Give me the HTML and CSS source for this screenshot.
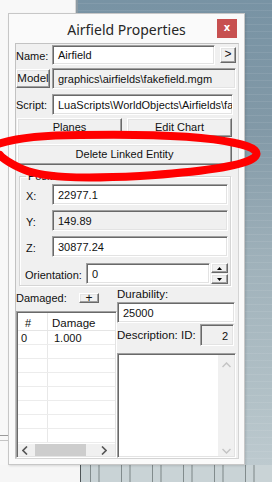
FILE: index.html
```html
<!DOCTYPE html>
<html>
<head>
<meta charset="utf-8">
<link rel="stylesheet" href="styles.css">
</head>
<body>
<div class="dialog">
  <div class="titlebar">
    <span></span>
    <span class="title">Airfield Properties</span>
    <span class="close">x</span>
  </div>
  <div class="client">
    <div class="row r-name">
      <span class="lbl w36">Name:</span>
      <div class="field f-name">Airfield</div>
      <div class="btn b-more">&gt;</div>
    </div>
    <div class="row r-model">
      <div class="btn b-model">Model</div>
      <div class="field disabled f-model">graphics\airfields\fakefield.mgm</div>
    </div>
    <div class="row r-script">
      <span class="lbl w36">Script:</span>
      <div class="field f-script">LuaScripts\WorldObjects\Airfields\fakefield.lua</div>
    </div>
    <div class="row r-btns">
      <div class="btn b-half">Planes</div>
      <div class="btn b-half">Edit Chart</div>
    </div>
    <div class="row r-delete">
      <div class="btn b-delete">Delete Linked Entity</div>
    </div>
    <fieldset class="group">
      <legend>Position</legend>
      <div class="row g-row g-first">
        <span class="lbl g-lbl">X:</span>
        <div class="field g-field">22977.1</div>
      </div>
      <div class="row g-row">
        <span class="lbl g-lbl">Y:</span>
        <div class="field disabled g-field">149.89</div>
      </div>
      <div class="row g-row">
        <span class="lbl g-lbl">Z:</span>
        <div class="field g-field">30877.24</div>
      </div>
      <div class="row g-row g-orient">
        <span class="lbl o-lbl">Orientation:</span>
        <div class="field o-field">0</div>
        <div class="spin">
          <div class="btn spin-btn"><svg width="5" height="3" viewBox="0 0 5 3"><path d="M0 3 L2.5 0 L5 3Z" fill="#000"/></svg></div>
          <div class="btn spin-btn"><svg width="5" height="3" viewBox="0 0 5 3"><path d="M0 0 L2.5 3 L5 0Z" fill="#000"/></svg></div>
        </div>
      </div>
    </fieldset>
    <div class="bottom">
      <div class="col-left">
        <div class="dmg-row">
          <span class="lbl dmg-lbl">Damaged:</span>
          <div class="btn b-plus">+</div>
        </div>
        <div class="listview sunken">
          <div class="lv-head">
            <span class="c1 h1">#</span>
            <span class="c2 h2">Damage</span>
          </div>
          <div class="lv-body">
            <div class="lv-row"><span class="c1 v1">0</span><span class="c2 v2">1.000</span></div>
            <div class="lv-row"><span class="c1"></span><span class="c2"></span></div>
            <div class="lv-row"><span class="c1"></span><span class="c2"></span></div>
            <div class="lv-row"><span class="c1"></span><span class="c2"></span></div>
            <div class="lv-row"><span class="c1"></span><span class="c2"></span></div>
            <div class="lv-row"><span class="c1"></span><span class="c2"></span></div>
            <div class="lv-row"><span class="c1"></span><span class="c2"></span></div>
            <div class="lv-row"><span class="c1"></span><span class="c2"></span></div>
          </div>
          <div class="hscroll">
            <svg class="arr" width="6" height="9" viewBox="0 0 6 9"><path d="M5 0.5 L1 4.5 L5 8.5" fill="none" stroke="#555" stroke-width="1.6"/></svg>
            <div class="thumb"></div>
            <svg class="arr arr-r" width="6" height="9" viewBox="0 0 6 9"><path d="M1 0.5 L5 4.5 L1 8.5" fill="none" stroke="#555" stroke-width="1.6"/></svg>
          </div>
        </div>
      </div>
      <div class="col-right">
        <div class="lbl dur-lbl">Durability:</div>
        <div class="field f-dur">25000</div>
        <div class="desc-row">
          <span class="lbl desc-lbl">Description:</span>
          <span class="lbl id-lbl">ID:</span>
          <div class="field disabled f-id">2</div>
        </div>
        <div class="textarea sunken">
          <div class="ta-text"></div>
          <div class="vscroll">
            <svg width="9" height="6" viewBox="0 0 9 6"><path d="M0.5 5 L4.5 1 L8.5 5" fill="none" stroke="#c4c4c4" stroke-width="1.5"/></svg>
            <svg width="9" height="6" viewBox="0 0 9 6"><path d="M0.5 1 L4.5 5 L8.5 1" fill="none" stroke="#c4c4c4" stroke-width="1.5"/></svg>
          </div>
        </div>
      </div>
    </div>
  </div>
</div>
<svg class="scribble" width="272" height="482" viewBox="0 0 272 482">
  <path d="M-8 146 C 10 139, 40 135, 80 135 C 140 134, 200 135, 235 143 C 255 147, 262 153, 252 159 C 240 166, 200 172, 140 176 C 80 179, 40 178, 20 168 C 8 162, 2 158, 0 155" fill="none" stroke="#ff0000" stroke-width="8" stroke-linecap="round" stroke-linejoin="round"/>
</svg>
</body>
</html>
```

FILE: styles.css
```css
* { box-sizing: border-box; }

html, body { margin: 0; }

body {
  width: 272px;
  height: 482px;
  overflow: hidden;
  position: relative;
  padding: 13px 0 0 8px;
  font-family: "Liberation Sans", Arial, sans-serif;
  font-size: 11px;
  color: #111;
  background:
    linear-gradient(#9a9a9a, #9a9a9a) 0 435px / 8px 1px no-repeat,
    linear-gradient(#c4c4c4, #c4c4c4) 0 440px / 8px 1px no-repeat,
    repeating-linear-gradient(to right, transparent 0 9px, rgba(70,80,80,.55) 9px 10px, transparent 10px 17px, rgba(90,100,100,.35) 17px 19px, transparent 19px 31px) 81px 465px / 191px 17px no-repeat,
    linear-gradient(to right, #f6f6f6 0 80px, #4d5457 80px 81px, #c9d3d6 81px) 0 465px / 100% 17px no-repeat,
    linear-gradient(to right, #f8f8f8 0 75px, #d6d6d6 75px 76px, #8d9ba4 76px 78px, transparent 78px) 0 0 / 100% 100% no-repeat,
    repeating-linear-gradient(to bottom, transparent 0 3px, rgba(255,255,255,.08) 3px 4px, transparent 4px 7px),
    linear-gradient(#7893a4 0, #8299a7 130px, #9fb1ba 260px, #b2c1c7 400px, #c0ccd1 482px);
}

.dialog {
  width: 237px;
  height: 452px;
  background: #fafafa;
  border: 1px solid #c7c7c7;
  box-shadow: 1px 1px 2px rgba(0,0,0,.12);
  padding-bottom: 5px;
}

.titlebar {
  height: 29px;
  display: grid;
  grid-template-columns: 1fr auto 1fr;
  align-items: start;
}

.title {
  font-family: "Noto Sans", "Open Sans", sans-serif;
  font-size: 14px;
  line-height: 20px;
  margin-top: 6px;
  color: #262626;
}

.close {
  justify-self: end;
  margin: 5px 7px 0 0;
  width: 20px;
  height: 19px;
  background: #c75050;
  color: #fff;
  font-family: "DejaVu Sans", sans-serif;
  font-weight: bold;
  font-size: 10px;
  line-height: 17px;
  text-align: center;
}

.client {
  margin: 0 5px 0 6px;
  height: 416px;
  background: #f0f0f0;
  border: 1px solid #d4d4d4;
  border-top-color: #c2c2c2;
  border-left-color: #c2c2c2;
}

.row { display: flex; align-items: flex-start; }

.lbl { display: block; white-space: nowrap; line-height: 14px; }

.w36 { width: 36px; padding-top: 4px; }

.field {
  height: 21px;
  background: #fff;
  border: 1px solid;
  border-color: #a0a0a0 #fff #fff #a0a0a0;
  box-shadow: inset 1px 1px #696969, inset -1px -1px #e3e3e3;
  padding: 3px 0 0 5px;
  line-height: 14px;
  white-space: nowrap;
  overflow: hidden;
}

.field.disabled { background: #f0f0f0; }

.btn {
  background: #f0f0f0;
  border: 1px solid;
  border-color: #fff #696969 #696969 #fff;
  box-shadow: inset -1px -1px #a0a0a0, inset 1px 1px #e3e3e3;
  text-align: center;
  line-height: 15px;
  white-space: nowrap;
}

.r-name { margin-top: 1px; }
.f-name { width: 163px; height: 20px; padding-top: 2px; }
.b-more { width: 16px; height: 16px; margin: 2px 0 0 5px; line-height: 13px; font-size: 12px; }

.r-model { margin-top: 3px; }
.b-model { width: 34px; height: 19px; margin-top: 1px; line-height: 16px; font-size: 11.5px; }
.f-model { width: 184px; margin-left: 2px; }

.r-script { margin-top: 5px; }
.f-script { width: 181px; }

.r-btns { margin-top: 3px; padding-left: 1px; gap: 5px; }
.b-half { width: 105px; height: 19px; line-height: 17px; }

.r-delete { margin-top: 7px; padding-left: 1px; }
.b-delete { width: 215px; height: 21px; line-height: 19px; }

.group {
  margin: 5px 0 0 3px;
  width: 212px;
  padding: 0 0 1px 0;
  border: 1px solid #d5d5d5;
  box-shadow: inset 1px 1px #fff, 1px 1px #fff;
  min-width: 0;
}

.group legend {
  margin-left: 6px;
  padding: 0 2px;
  line-height: 13px;
}

.g-row { margin-top: 5px; }
.g-first { margin-top: 1px; }
.g-orient { margin-top: 6px; }
.g-lbl { width: 32px; padding: 5px 0 0 6px; }
.g-field { width: 176px; }
.o-lbl { width: 66px; padding: 5px 0 0 5px; }
.o-field { width: 124px; }

.spin { display: flex; flex-direction: column; gap: 1px; margin-left: 1px; }
.spin-btn {
  width: 17px;
  height: 10px;
  display: flex;
  align-items: center;
  justify-content: center;
}

.bottom { display: flex; }

.col-left { width: 101px; display: flex; flex-direction: column; }

.dmg-row { display: flex; height: 25px; }
.dmg-lbl { width: 63px; padding-top: 5px; }
.b-plus { width: 20px; height: 10px; margin-top: 7px; line-height: 8px; font-size: 12px; }

.sunken {
  border: 1px solid;
  border-color: #a0a0a0 #fff #fff #a0a0a0;
  box-shadow: inset 1px 1px #696969, inset -1px -1px #e3e3e3;
  padding: 1px;
}

.listview {
  height: 147px;
  background: #fff;
  display: flex;
  flex-direction: column;
}

.lv-head {
  display: flex;
  height: 18px;
  border-bottom: 1px solid #e5e5e5;
  flex-shrink: 0;
}

.c1 { width: 30px; border-right: 1px solid #e8e8e8; flex-shrink: 0; }
.c2 { flex: 1; }

.h1 { padding: 3px 0 0 7px; line-height: 14px; }
.h2 { padding: 3px 0 0 4px; line-height: 14px; font-size: 11.5px; }

.lv-body { flex: 1; overflow: hidden; }
.lv-row { display: flex; height: 14px; border-bottom: 1px solid #ececec; }
.v1 { padding: 1px 0 0 3px; line-height: 13px; }
.v2 { padding: 1px 0 0 6px; line-height: 13px; }

.hscroll {
  flex-shrink: 0;
  height: 12px;
  background: #f0f0f0;
  display: flex;
  align-items: center;
  padding-left: 4px;
}
.thumb { width: 51px; height: 12px; background: #cdcdcd; margin-left: 7px; }
.arr-r { margin-left: 15px; }

.col-right { width: 119px; display: flex; flex-direction: column; }

.dur-lbl { padding-top: 1px; font-size: 11.5px; }
.f-dur { width: 118px; margin-top: 1px; }

.desc-row { display: flex; align-items: center; height: 22px; margin-top: 1px; }
.desc-lbl { width: 64px; font-size: 11.5px; }
.id-lbl { width: 19px; font-size: 11.5px; }
.f-id { width: 34px; height: 22px; text-align: right; padding: 4px 5px 0 0; }

.textarea {
  margin-top: 7px;
  height: 105px;
  width: 119px;
  background: #fff;
  display: flex;
}
.ta-text { flex: 1; }
.vscroll {
  width: 16px;
  background: #f0f0f0;
  display: flex;
  flex-direction: column;
  justify-content: space-between;
  align-items: center;
  padding: 7px 0 2px;
}

.scribble {
  position: absolute;
  left: 0;
  top: 0;
  pointer-events: none;
}
```
